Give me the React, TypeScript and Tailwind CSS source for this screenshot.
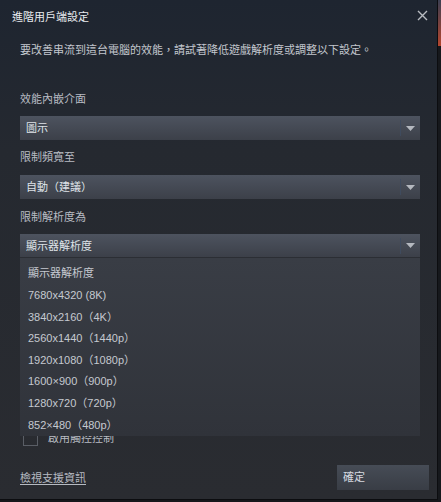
import React from 'react';

const CJK = "font-['Liberation_Sans','Noto_Sans_CJK_TC',sans-serif]";

const Caret = () => (
  <svg width="9" height="5" viewBox="0 0 9 5" className="text-[#b4b8bf]">
    <path d="M0 0h9L4.5 5z" fill="currentColor" />
  </svg>
);

const Select: React.FC<{ value: string; open?: boolean }> = ({ value, open }) => (
  <div
    className={`flex items-center h-6 bg-[linear-gradient(to_bottom,#4d535f,#3c4049)] ${open ? 'border-b border-[#2b2e34]' : ''}`}
  >
    <span className="flex-1 pl-[6px] text-[11px] text-[#dfe3e8] leading-none pt-[1px]">{value}</span>
    <div className="w-px h-4 bg-[#3f4b5e]" />
    <div className="w-[19px] flex items-center justify-center">
      <Caret />
    </div>
  </div>
);

const options = [
  '顯示器解析度',
  '7680x4320 (8K)',
  '3840x2160（4K）',
  '2560x1440（1440p）',
  '1920x1080（1080p）',
  '1600×900（900p）',
  '1280x720（720p）',
  '852×480（480p）',
];

export default function App() {
  return (
    <div className={`w-[441px] h-[502px] bg-[#16181c] flex ${CJK}`}>
      <div className="relative w-[438px] h-[500px] border-r border-b border-[#0c0d10] bg-[linear-gradient(to_bottom,#1e2530_0%,#252930_30%,#2a2c31_100%)] flex flex-col">
        {/* Title */}
        <div className="flex items-center justify-between h-[34px] pl-3 pr-[9px] pt-[1px]">
          <span className="text-[11px] text-[#e8ebef]">進階用戶端設定</span>
          <svg width="11" height="11" viewBox="0 0 11 11" className="mb-[4px]">
            <path d="M1 1l9 9M10 1l-9 9" stroke="#b9bcc1" strokeWidth="1.4" />
          </svg>
        </div>

        <div className="flex flex-col pl-5 pr-[17px]">
          <p className="text-[11px] text-[#c3c7ce] mt-[9px] leading-[14px]">
            要改善串流到這台電腦的效能，請試著降低遊戲解析度或調整以下設定。
          </p>

          <div className="text-[11px] text-[#b8bcc3] mt-[35px] leading-[14px]">效能內嵌介面</div>
          <div className="mt-[10px]">
            <Select value="圖示" />
          </div>

          <div className="text-[11px] text-[#b8bcc3] mt-[10px] leading-[14px]">限制頻寬至</div>
          <div className="mt-[11px]">
            <Select value="自動（建議）" />
          </div>

          <div className="text-[11px] text-[#b8bcc3] mt-[11px] leading-[14px]">限制解析度為</div>
          <div className="mt-[10px]">
            <Select value="顯示器解析度" open />
          </div>

          <div className="relative h-[200px]">
            {/* checkbox underneath the open list */}
            <div className="absolute left-[3px] top-[172px] flex items-center gap-[10px]">
              <div className="w-[15px] h-[15px] border border-[#5a5e66]" />
              <span className="text-[11px] text-[#b8bcc3]">啟用觸控控制</span>
            </div>
            {/* open list */}
            <div className="absolute inset-x-0 top-0 h-[178px] bg-[linear-gradient(to_bottom,#393d45,#30333a)] flex flex-col pt-[5px] pl-2">
              {options.map(o => (
                <div key={o} className="h-[22px] flex items-center text-[11px] text-[#c5c9d0] leading-none">
                  {o}
                </div>
              ))}
            </div>
          </div>

          <div className="flex items-end justify-between mt-[7px] -mr-[9px]">
            <a className="text-[11px] text-[#b6bac1] underline underline-offset-2 mb-[4px]">檢視支援資訊</a>
            <div className="w-[92px] h-[25px] bg-[linear-gradient(to_bottom,#464c56,#393d45)] flex items-center pl-[6px] text-[11px] text-[#d6dae0]">
              確定
            </div>
          </div>
        </div>
      </div>
      <div className="flex-1 flex flex-col">
        <div className="h-[46px] bg-[linear-gradient(to_bottom,#3b3f52,#b5462e)]" />
      </div>
    </div>
  );
}
